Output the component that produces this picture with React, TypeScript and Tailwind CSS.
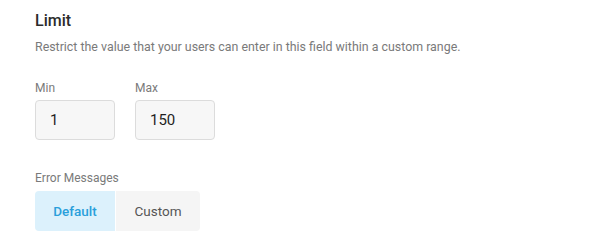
import { useState } from "react";

function NumberField({ label, value }: { label: string; value: string }) {
  return (
    <div className="flex flex-col">
      <label className="text-[12px] leading-4 text-[#7a7a7a]">{label}</label>
      <input
        defaultValue={value}
        className="mt-1 h-10 w-20 rounded border border-[#dcdcdc] bg-[#f7f7f7] px-[14px] text-[15px] text-[#1f1f1f] outline-none"
      />
    </div>
  );
}

export default function App() {
  const [mode, setMode] = useState<"default" | "custom">("default");

  return (
    <div
      className="min-h-screen bg-white pl-[35px] pt-[9px]"
      style={{ fontFamily: "Roboto, 'Liberation Sans', sans-serif" }}
    >
      <h2 className="text-[16px] font-medium leading-6 text-[#2b2b2b]">Limit</h2>
      <p className="mt-1 text-[12.4px] leading-5 text-[#7a7a7a]">
        Restrict the value that your users can enter in this field within a custom range.
      </p>

      <div className="mt-[23px] flex gap-5">
        <NumberField label="Min" value="1" />
        <NumberField label="Max" value="150" />
      </div>

      <div className="mt-[30px] text-[12px] leading-4 text-[#7a7a7a]">Error Messages</div>
      <div className="mt-[5px] flex h-10 w-fit gap-px overflow-hidden rounded">
        <button
          onClick={() => setMode("default")}
          className={`w-20 text-[13.5px] ${
            mode === "default" ? "bg-[#dcf1fc] font-medium text-[#2a9fdb]" : "bg-[#f5f5f5] text-[#555]"
          }`}
        >
          Default
        </button>
        <button
          onClick={() => setMode("custom")}
          className={`w-[84px] text-[13.5px] ${
            mode === "custom" ? "bg-[#dcf1fc] font-medium text-[#2a9fdb]" : "bg-[#f5f5f5] text-[#555]"
          }`}
        >
          Custom
        </button>
      </div>
    </div>
  );
}
